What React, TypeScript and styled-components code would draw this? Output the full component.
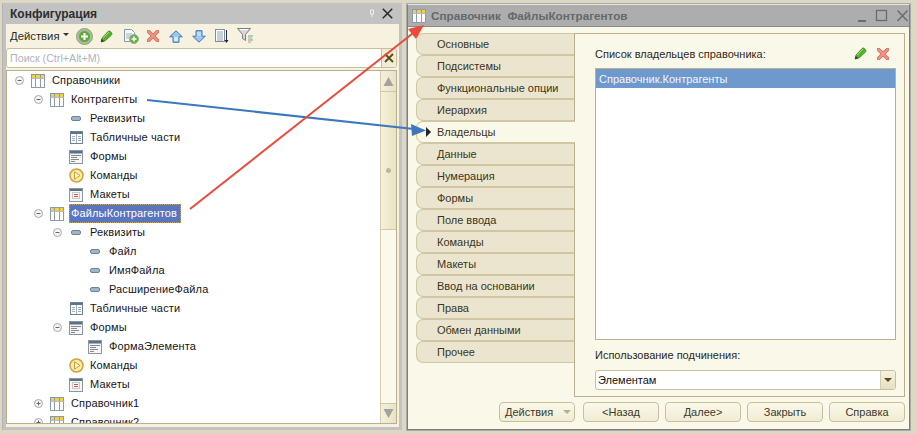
import React from "react";
import styled, { createGlobalStyle } from "styled-components";

const Global = createGlobalStyle`
  html, body { margin: 0; padding: 0; background: #dcd8c4; }
  body { font-family: "Liberation Sans", Arial, sans-serif; font-size: 11px; color: #1c1c1c; overflow: hidden; }
  * { box-sizing: border-box; }
`;

const Page = styled.div`
  position: relative;
  width: 917px;
  height: 434px;
  display: flex;
  align-items: flex-start;
  padding: 3px 0 0 2px;
  background: #dcd8c4;
  overflow: hidden;
`;

/* ---------- left panel ---------- */
const ConfigPanel = styled.section`
  width: 400px;
  height: 427px;
  flex: none;
  display: flex;
  flex-direction: column;
  background: #c2c2c2;
  padding: 0 3px 3px 3px;
  border-left: 1px solid #b4b4b4;
`;
const ConfigTitle = styled.header`
  height: 21px;
  flex: none;
  display: flex;
  align-items: center;
  justify-content: space-between;
  padding: 0 6px 0 4px;
  font-weight: bold;
  font-size: 12px;
  color: #2e2e2e;
`;
const TitleControls = styled.div`
  display: flex;
  align-items: center;
  gap: 7px;
`;
const PanelBody = styled.div`
  flex: 1;
  min-height: 0;
  display: flex;
  flex-direction: column;
  background: #f6f2df;
  padding: 0 2px 3px 0;
`;
const Toolbar = styled.div`
  height: 24px;
  flex: none;
  display: flex;
  align-items: center;
  padding-left: 4px;
`;
const ActionsMenu = styled.span`
  display: flex;
  align-items: center;
  width: 62px;
  font-size: 11.3px;
  color: #2b2b1e;
`;
const Caret = styled.i`
  margin-left: 3px;
  margin-top: -3px;
  width: 0;
  height: 0;
  border-left: 3px solid transparent;
  border-right: 3px solid transparent;
  border-top: 3px solid #333;
`;
const ToolSlot = styled.span<{ $w: number }>`
  width: ${(p) => p.$w}px;
  flex: none;
  display: flex;
  justify-content: center;
  align-items: center;
`;
const SearchRow = styled.div`
  height: 20px;
  flex: none;
  margin: 0 0 2px 0;
  display: flex;
  background: #fff;
  border: 1px solid #c8c09c;
  border-radius: 3px;
  align-items: center;
  justify-content: space-between;
  color: #b0b4bd;
  padding-left: 3px;
  font-size: 10.7px;
`;
const SearchClear = styled.span`
  width: 15px;
  height: 18px;
  display: flex;
  align-items: center;
  justify-content: center;
  background: #f1ecd6;
  border-left: 1px solid #c8c09c;
  border-radius: 0 3px 3px 0;
`;
const TreeFrame = styled.div`
  flex: 1;
  min-height: 0;
  display: flex;
  background: #fff;
  border: 1px solid #b9b18e;
  overflow: hidden;
`;
const TreeList = styled.ul`
  flex: 1;
  list-style: none;
  margin: 0;
  padding: 0;
  overflow: hidden;
`;
const TreeRow = styled.li<{ $level: number }>`
  height: 19px;
  display: flex;
  align-items: center;
  padding-left: ${(p) => 5 + p.$level * 19}px;
  color: #15151a;
  white-space: nowrap;
`;
const Toggle = styled.span`
  width: 14px;
  height: 14px;
  flex: none;
  margin-right: 4px;
  display: flex;
  align-items: center;
  justify-content: center;
`;
const NodeIcon = styled.span`
  width: 16px;
  height: 16px;
  flex: none;
  display: flex;
  align-items: center;
  justify-content: center;
`;
const NodeLabel = styled.span<{ $selected?: boolean }>`
  margin-left: 4px;
  padding: 0 4px 0 2px;
  height: 19px;
  line-height: 18px;
  letter-spacing: 0.14px;
  background: ${(p) => (p.$selected ? "#5a74c0" : "transparent")};
  color: ${(p) => (p.$selected ? "#fff" : "inherit")};
  outline: ${(p) => (p.$selected ? "1px dotted #c9a84a" : "none")};
  outline-offset: -1px;
`;
const Scrollbar = styled.div`
  width: 16px;
  flex: none;
  display: flex;
  flex-direction: column;
  background: #fbf9ec;
  border-left: 1px solid #d5ceae;
`;
const ScrollButton = styled.div`
  height: 20px;
  flex: none;
  display: flex;
  align-items: center;
  justify-content: center;
  background: linear-gradient(to right, #f4f0dc, #e8e2c6);
`;
const ScrollThumb = styled.div`
  height: 139px;
  flex: none;
  display: flex;
  align-items: center;
  justify-content: center;
  padding-top: 20px;
  background: linear-gradient(to right, #f6f1d8, #e9e2c2);
  border-bottom: 1px solid #cfc8a3;
  border-top: 1px solid #cfc8a3;
`;
const ScrollGrip = styled.i`
  width: 5px;
  height: 5px;
  border-radius: 50%;
  background: #b9b6a4;
`;
const ScrollSpacer = styled.div`
  flex: 1;
`;
const ScrollDown = styled(ScrollButton)`
  border-top: 1px solid #cfc8a3;
`;

/* ---------- right window ---------- */
const DialogWindow = styled.section`
  margin-left: 5px;
  margin-top: 1px;
  width: 503px;
  height: 426px;
  flex: none;
  display: flex;
  flex-direction: column;
  background: #faf8e9;
  border: 1px solid #7c7f80;
  border-top: 1px solid #e6e6e0;
  outline: 1px solid #a9a9a6;
`;
const DialogTitle = styled.header`
  height: 22px;
  flex: none;
  display: flex;
  align-items: center;
  padding: 0 1px 0 4px;
  background: #adadad;
  border-bottom: 1px solid #8a8a8a;
  font-weight: bold;
  font-size: 11.7px;
  color: #65686e;
`;
const DialogTitleText = styled.span`
  flex: 1;
  margin-left: 5px;
  white-space: pre;
`;
const DialogBody = styled.div`
  flex: 1;
  min-height: 0;
  display: flex;
  flex-direction: column;
  padding: 6px 4px 0 8px;
`;
const TabbedArea = styled.div`
  height: 364px;
  flex: none;
  display: flex;
`;
const TabList = styled.div`
  width: 158px;
  flex: none;
  display: flex;
  flex-direction: column;
`;
const Tab = styled.div<{ $active?: boolean }>`
  height: 22px;
  flex: none;
  position: relative;
  display: flex;
  align-items: center;
  padding-left: 20px;
  margin-right: ${(p) => (p.$active ? "-1px" : "0")};
  background: ${(p) => (p.$active ? "#faf8e9" : "#ebe5cf")};
  border: 1px solid #cfc7a4;
  border-right: ${(p) => (p.$active ? "none" : "0")};
  border-left-color: ${(p) => (p.$active ? "#f0c860" : "#cfc7a4")};
  border-radius: 7px 0 0 7px;
  color: #3a3620;
  z-index: ${(p) => (p.$active ? 2 : 1)};
`;
const TabMarker = styled.i`
  position: absolute;
  left: 9px;
  top: 5px;
  width: 0;
  height: 0;
  border-top: 5px solid transparent;
  border-bottom: 5px solid transparent;
  border-left: 5px solid #222;
`;
const TabPage = styled.div`
  flex: 1;
  display: flex;
  flex-direction: column;
  border: 1px solid #b9b18e;
  padding: 10px 8px 6px 20px;
`;
const OwnerHeader = styled.div`
  height: 19px;
  flex: none;
  display: flex;
  align-items: center;
  justify-content: space-between;
  color: #2c2a1a;
  padding-right: 7px;
  margin-bottom: 5px;
`;
const OwnerTools = styled.div`
  display: flex;
  align-items: center;
  gap: 10px;
`;
const OwnerList = styled.div`
  height: 272px;
  flex: none;
  background: #fff;
  border: 1px solid #b9b18e;
`;
const OwnerRow = styled.div`
  height: 19px;
  display: flex;
  align-items: center;
  padding-left: 3px;
  background: #6e99cd;
  color: #f2f6fb;
`;
const UsageLabel = styled.div`
  margin-top: 6px;
  height: 19px;
  display: flex;
  align-items: center;
  color: #2c2a1a;
`;
const Select = styled.div`
  margin-top: 6px;
  height: 20px;
  flex: none;
  display: flex;
  align-items: center;
  background: #fff;
  border: 1px solid #c8c09c;
  border-radius: 3px;
  padding-left: 2px;
  color: #111;
  justify-content: space-between;
`;
const SelectButton = styled.span`
  width: 15px;
  height: 18px;
  display: flex;
  align-items: center;
  justify-content: center;
  background: linear-gradient(#f6f2de, #e5dfc4);
  border-left: 1px solid #d5ceae;
  border-radius: 0 3px 3px 0;
`;
const ButtonDown = styled.i`
  width: 0;
  height: 0;
  border-left: 4px solid transparent;
  border-right: 4px solid transparent;
  border-top: 4px solid #5c4a14;
`;
const Footer = styled.div`
  margin-top: 5px;
  height: 20px;
  flex: none;
  display: flex;
  justify-content: flex-end;
  gap: 6px;
`;
const FooterButton = styled.button<{ $menu?: boolean }>`
  width: 76px;
  height: 20px;
  padding: 0 0 0 ${(p) => (p.$menu ? 5 : 0)}px;
  margin: 0;
  margin-right: ${(p) => (p.$menu ? 2 : 0)}px;
  display: flex;
  align-items: center;
  justify-content: ${(p) => (p.$menu ? "flex-start" : "center")};
  font: inherit;
  color: #3c3a28;
  background: linear-gradient(#fbf9ea, #f0ebd4);
  border: 1px solid #c8c09c;
  border-radius: 4px;
`;
const MenuCaret = styled.i`
  margin-left: 10px;
  width: 0;
  height: 0;
  border-left: 4px solid transparent;
  border-right: 4px solid transparent;
  border-top: 4px solid #b4ad90;
`;
const ArrowLayer = styled.svg`
  position: absolute;
  left: 0;
  top: 0;
  pointer-events: none;
  z-index: 5;
`;

/* ---------- icons ---------- */
const Catalog = () => (
  <svg width="14" height="14" viewBox="0 0 14 14">
    <rect x="0.5" y="0.5" width="13" height="13" fill="#fff" stroke="#8b9bab" />
    <rect x="1" y="1" width="12" height="3" fill="#f1d04c" />
    <path d="M4.5 1v12M9.5 1v12" stroke="#8b9bab" />
    <path d="M0.5 4.5h13" stroke="#b4bcc4" />
  </svg>
);
const Attribute = () => (
  <svg width="10" height="5" viewBox="0 0 10 5">
    <rect x="0.5" y="0.5" width="9" height="4" rx="1.5" fill="#9db6cb" stroke="#6d8498" />
  </svg>
);
const TableParts = () => (
  <svg width="13" height="13" viewBox="0 0 13 13">
    <rect x="0.5" y="0.5" width="12" height="12" fill="#fff" stroke="#6f8296" />
    <rect x="1" y="1" width="11" height="2" fill="#5d7389" />
    <path d="M6.500 3v9M2 5.5h3M2 7.5h3M2 9.500h3M8 5.500h3M8 7.500h3M8 9.500h3" stroke="#9fb0c0" />
  </svg>
);
const FormIcon = () => (
  <svg width="14" height="14" viewBox="0 0 14 14">
    <rect x="0.5" y="0.500" width="13" height="13" fill="#f4f5f4" stroke="#8a97a4" />
    <rect x="1" y="1" width="12" height="2.500" fill="#5a7088" />
    <path d="M2 5.500h10M2 7.500h6M2 9.500h8M2 11.500h4" stroke="#8a8a8a" />
  </svg>
);
const CommandIcon = () => (
  <svg width="15" height="15" viewBox="0 0 15 15">
    <circle cx="7.500" cy="7.500" r="6.500" fill="#fbeaa8" stroke="#cfa23a" strokeWidth="1.500" />
    <path d="M5.500 3.800v7.400l5.500-3.700z" fill="#fff8dc" stroke="#c9a040" />
  </svg>
);
const TemplateIcon = () => (
  <svg width="14" height="14" viewBox="0 0 14 14">
    <rect x="0.500" y="0.500" width="13" height="13" fill="#f6f6f4" stroke="#8a97a4" />
    <rect x="1" y="1" width="12" height="2" fill="#5a7088" />
    <rect x="3.500" y="4.500" width="7" height="6" fill="none" stroke="#9a9a9a" strokeDasharray="1 1" />
    <path d="M5 6.500h4M5 8.500h4" stroke="#d8504a" />
  </svg>
);
const ToggleIcon = ({ open }: { open: boolean }) => (
  <svg width="9" height="9" viewBox="0 0 9 9">
    <circle cx="4.500" cy="4.500" r="4" fill="#f6f6f6" stroke="#a6a6a6" />
    <path d={open ? "M2.500 4.500h4" : "M2.500 4.500h4M4.500 2.500v4"} stroke="#666" />
  </svg>
);
const AddCircle = () => (
  <svg width="17" height="17" viewBox="0 0 17 17">
    <circle cx="8.500" cy="8.500" r="8" fill="#a8bd9c" stroke="#8fa283" />
    <circle cx="8.500" cy="8.500" r="5.500" fill="#62a83c" />
    <path d="M8.500 5v7M5 8.500h7" stroke="#fff" strokeWidth="2" />
  </svg>
);
const Pencil = () => (
  <svg width="13" height="13" viewBox="0 0 13 13">
    <path d="M1 12l1-4 6-6.500c1-.8 2-.5 3 .5s1.200 2 .5 3L5 11z" fill="#58b030" stroke="#2f7a18" strokeWidth="0.700" />
    <path d="M3 8l6-6" stroke="#a8e07c" />
    <path d="M1 12l.8-3 2.200 2.200z" fill="#26341c" />
  </svg>
);
const NewDoc = () => (
  <svg width="16" height="16" viewBox="0 0 16 16">
    <path d="M1.500 1.500h7l3 3v9h-10z" fill="#f4f6f8" stroke="#8a97a8" />
    <path d="M3 6h6M3 8h5M3 10h4" stroke="#a8b0b8" />
    <circle cx="11" cy="11" r="4.500" fill="#66ad48" stroke="#98b88a" />
    <path d="M11 8.500v5M8.500 11h5" stroke="#fff" strokeWidth="1.500" />
  </svg>
);
const Cross = () => (
  <svg width="12" height="12" viewBox="0 0 12 12">
    <path d="M1.500 1.500l9 9M10.500 1.500l-9 9" stroke="#c9675c" strokeWidth="3.600" strokeLinecap="round" />
    <path d="M1.500 1.500l9 9M10.500 1.500l-9 9" stroke="#f29384" strokeWidth="2.200" strokeLinecap="round" />
  </svg>
);
const UpArrow = () => (
  <svg width="14" height="13" viewBox="0 0 14 13">
    <path d="M7 .8L13.300 6.800H10v5.500H4V6.800H.7z" fill="#9cc8ec" stroke="#3b78b4" />
    <path d="M5 7h4v4H5z" fill="#d6ebfa" />
  </svg>
);
const DownArrow = () => (
  <svg width="14" height="13" viewBox="0 0 14 13">
    <path d="M7 12.200L13.300 6.200H10V.7H4v5.500H.7z" fill="#9cc8ec" stroke="#3b78b4" />
    <path d="M5 2h4v4H5z" fill="#bcdcf5" />
  </svg>
);
const ListSort = () => (
  <svg width="14" height="15" viewBox="0 0 14 15">
    <rect x="0.500" y="0.500" width="9" height="12" fill="#fff" stroke="#7c8ea0" />
    <path d="M2 3h6M2 5h6M2 7h6M2 9h6M2 11h6" stroke="#8aa0b4" />
    <path d="M11.500 1v11" stroke="#333" />
    <path d="M9.500 11h4l-2 3z" fill="#222" />
  </svg>
);
const Filter = () => (
  <svg width="17" height="16" viewBox="0 0 17 16">
    <path d="M.5 .5h13l-5 6v6l-3-2V6.500z" fill="#d8d8d8" stroke="#7d7d7d" />
    <path d="M3 1.500h8" stroke="#fff" />
    <path d="M11 8h5" stroke="#6b9ec0" />
    <path d="M11 10h4" stroke="#b2b84a" />
    <path d="M11 12h5" stroke="#6b9ec0" />
    <path d="M11 14h3" stroke="#c89a48" />
  </svg>
);
const SmallX = () => (
  <svg width="10" height="10" viewBox="0 0 10 10">
    <path d="M1 1l8 8M9 1l-8 8" stroke="#5c4a14" strokeWidth="1.800" />
  </svg>
);
const PanelClose = () => (
  <svg width="11" height="11" viewBox="0 0 10 10">
    <path d="M.7 .7l8.600 8.600M9.300 .7L.7 9.300" stroke="#2a2a2a" strokeWidth="1.400" />
  </svg>
);
const Pin = () => (
  <svg width="6" height="9" viewBox="0 0 6 9">
    <path d="M1.500 1h3v4h-3zM3 5v3" stroke="#efefef" fill="none" />
  </svg>
);
const Triangle = ({ up }: { up: boolean }) => (
  <svg width="11" height="9" viewBox="0 0 11 9">
    <path d={up ? "M5.500 0l5 9H.5z" : "M5.500 9l5-9H.5z"} fill="#a2a2a0" />
  </svg>
);
const WindowControls = () => (
  <svg width="50" height="14" viewBox="0 0 50 14">
    <path d="M0 12h8" stroke="#6a6c6e" strokeWidth="2" />
    <rect x="18.500" y="1.500" width="10" height="10" fill="none" stroke="#6a6c6e" strokeWidth="1.300" />
    <path d="M39.500 1.500l10 10.500M49.500 1.500l-10 10.500" stroke="#6a6c6e" strokeWidth="1.500" />
  </svg>
);

type Kind = "catalog" | "attr" | "table" | "form" | "cmd" | "tpl";
const kindIcon: Record<Kind, React.ReactNode> = {
  catalog: <Catalog />,
  attr: <Attribute />,
  table: <TableParts />,
  form: <FormIcon />,
  cmd: <CommandIcon />,
  tpl: <TemplateIcon />,
};

type Node = { level: number; kind: Kind; text: string; toggle?: "open" | "closed"; selected?: boolean };
const nodes: Node[] = [
  { level: 0, kind: "catalog", text: "Справочники", toggle: "open" },
  { level: 1, kind: "catalog", text: "Контрагенты", toggle: "open" },
  { level: 2, kind: "attr", text: "Реквизиты" },
  { level: 2, kind: "table", text: "Табличные части" },
  { level: 2, kind: "form", text: "Формы" },
  { level: 2, kind: "cmd", text: "Команды" },
  { level: 2, kind: "tpl", text: "Макеты" },
  { level: 1, kind: "catalog", text: "ФайлыКонтрагентов", toggle: "open", selected: true },
  { level: 2, kind: "attr", text: "Реквизиты", toggle: "open" },
  { level: 3, kind: "attr", text: "Файл" },
  { level: 3, kind: "attr", text: "ИмяФайла" },
  { level: 3, kind: "attr", text: "РасширениеФайла" },
  { level: 2, kind: "table", text: "Табличные части" },
  { level: 2, kind: "form", text: "Формы", toggle: "open" },
  { level: 3, kind: "form", text: "ФормаЭлемента" },
  { level: 2, kind: "cmd", text: "Команды" },
  { level: 2, kind: "tpl", text: "Макеты" },
  { level: 1, kind: "catalog", text: "Справочник1", toggle: "closed" },
  { level: 1, kind: "catalog", text: "Справочник2", toggle: "closed" },
];

const tabs = [
  "Основные", "Подсистемы", "Функциональные опции", "Иерархия", "Владельцы", "Данные", "Нумерация",
  "Формы", "Поле ввода", "Команды", "Макеты", "Ввод на основании", "Права", "Обмен данными", "Прочее",
];

export default function App() {
  return (
    <Page>
      <Global />
      <ConfigPanel>
        <ConfigTitle>
          <span>Конфигурация</span>
          <TitleControls>
            <Pin />
            <PanelClose />
          </TitleControls>
        </ConfigTitle>
        <PanelBody>
          <Toolbar>
            <ActionsMenu>
              Действия
              <Caret />
            </ActionsMenu>
            <ToolSlot $w={24}><AddCircle /></ToolSlot>
            <ToolSlot $w={21}><Pencil /></ToolSlot>
            <ToolSlot $w={27}><NewDoc /></ToolSlot>
            <ToolSlot $w={17}><Cross /></ToolSlot>
            <ToolSlot $w={29}><UpArrow /></ToolSlot>
            <ToolSlot $w={17}><DownArrow /></ToolSlot>
            <ToolSlot $w={29}><ListSort /></ToolSlot>
            <ToolSlot $w={18}><Filter /></ToolSlot>
          </Toolbar>
          <SearchRow>
            Поиск (Ctrl+Alt+M)
            <SearchClear><SmallX /></SearchClear>
          </SearchRow>
          <TreeFrame>
            <TreeList>
              {nodes.map((n, i) => (
                <TreeRow key={i} $level={n.level}>
                  <Toggle>{n.toggle && <ToggleIcon open={n.toggle === "open"} />}</Toggle>
                  <NodeIcon>{kindIcon[n.kind]}</NodeIcon>
                  <NodeLabel $selected={n.selected}>{n.text}</NodeLabel>
                </TreeRow>
              ))}
            </TreeList>
            <Scrollbar>
              <ScrollButton><Triangle up /></ScrollButton>
              <ScrollThumb><ScrollGrip /></ScrollThumb>
              <ScrollSpacer />
              <ScrollDown><Triangle up={false} /></ScrollDown>
            </Scrollbar>
          </TreeFrame>
        </PanelBody>
      </ConfigPanel>

      <DialogWindow>
        <DialogTitle>
          <Catalog />
          <DialogTitleText>Справочник  ФайлыКонтрагентов</DialogTitleText>
          <WindowControls />
        </DialogTitle>
        <DialogBody>
          <TabbedArea>
            <TabList>
              {tabs.map((t) => (
                <Tab key={t} $active={t === "Владельцы"}>
                  {t === "Владельцы" && <TabMarker />}
                  {t}
                </Tab>
              ))}
            </TabList>
            <TabPage>
              <OwnerHeader>
                Список владельцев справочника:
                <OwnerTools>
                  <Pencil />
                  <Cross />
                </OwnerTools>
              </OwnerHeader>
              <OwnerList>
                <OwnerRow>Справочник.Контрагенты</OwnerRow>
              </OwnerList>
              <UsageLabel>Использование подчинения:</UsageLabel>
              <Select>
                Элементам
                <SelectButton><ButtonDown /></SelectButton>
              </Select>
            </TabPage>
          </TabbedArea>
          <Footer>
            <FooterButton $menu>Действия<MenuCaret /></FooterButton>
            <FooterButton>&lt;Назад</FooterButton>
            <FooterButton>Далее&gt;</FooterButton>
            <FooterButton>Закрыть</FooterButton>
            <FooterButton>Справка</FooterButton>
          </Footer>
        </DialogBody>
      </DialogWindow>

      <ArrowLayer width="917" height="434" viewBox="0 0 917 434">
        <path d="M147 100L414 129" stroke="#3c78bc" strokeWidth="2" fill="none" />
        <path d="M426 130.500l-15-6.500 1 12z" fill="#3c78bc" />
        <path d="M190 209L417 30" stroke="#ea4a3c" strokeWidth="2" fill="none" />
        <path d="M424 25l-16 4 8 10z" fill="#ea4a3c" />
      </ArrowLayer>
    </Page>
  );
}
